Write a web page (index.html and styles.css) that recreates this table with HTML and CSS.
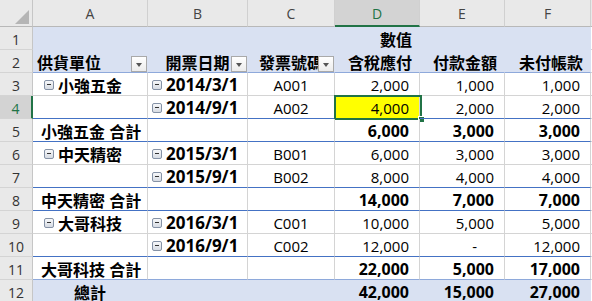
FILE: index.html
```html
<!DOCTYPE html>
<html>
<head>
<meta charset="utf-8">
<link rel="stylesheet" href="styles.css">
</head>
<body>
<div class="sheet">
  <div class="corner"><span class="tri"></span></div>
  <div class="ch">A</div>
  <div class="ch">B</div>
  <div class="ch">C</div>
  <div class="ch sel">D</div>
  <div class="ch">E</div>
  <div class="ch">F</div>
  <div class="ch fill"></div>

  <div class="rh">1</div>
  <div class="c ph"></div>
  <div class="c ph"></div>
  <div class="c ph"></div>
  <div class="c ph hd b">數值</div>
  <div class="c ph"></div>
  <div class="c ph"></div>
  <div class="c fill"></div>

  <div class="rh">2</div>
  <div class="c ph r2 b">供貨單位<span class="flt"></span></div>
  <div class="c ph r2 b ctr">開票日期<span class="flt"></span></div>
  <div class="c ph r2 b ctr clip"><span class="txt">發票號碼</span><span class="flt"></span></div>
  <div class="c ph r2 hd b">含稅應付</div>
  <div class="c ph r2 hd b">付款金額</div>
  <div class="c ph r2 hd b">未付帳款</div>
  <div class="c fill"></div>

  <div class="rh">3</div>
  <div class="c b lv1"><span class="tg"></span>小強五金</div>
  <div class="c b dt lv2"><span class="tg"></span>2014/3/1</div>
  <div class="c ctr">A001</div>
  <div class="c num">2,000</div>
  <div class="c num">1,000</div>
  <div class="c num">1,000</div>
  <div class="c fill"></div>

  <div class="rh rsel">4</div>
  <div class="c bl"></div>
  <div class="c b dt lv2 bl"><span class="tg"></span>2014/9/1</div>
  <div class="c ctr bl">A002</div>
  <div class="c num bl hl">4,000<span class="cur"><span class="handle"></span></span></div>
  <div class="c num bl">2,000</div>
  <div class="c num bl">2,000</div>
  <div class="c fill"></div>

  <div class="rh">5</div>
  <div class="c b st bl">小強五金 合計</div>
  <div class="c bl"></div>
  <div class="c bl"></div>
  <div class="c num b bl">6,000</div>
  <div class="c num b bl">3,000</div>
  <div class="c num b bl">3,000</div>
  <div class="c fill"></div>

  <div class="rh">6</div>
  <div class="c b lv1"><span class="tg"></span>中天精密</div>
  <div class="c b dt lv2"><span class="tg"></span>2015/3/1</div>
  <div class="c ctr">B001</div>
  <div class="c num">6,000</div>
  <div class="c num">3,000</div>
  <div class="c num">3,000</div>
  <div class="c fill"></div>

  <div class="rh">7</div>
  <div class="c bl"></div>
  <div class="c b dt lv2 bl"><span class="tg"></span>2015/9/1</div>
  <div class="c ctr bl">B002</div>
  <div class="c num bl">8,000</div>
  <div class="c num bl">4,000</div>
  <div class="c num bl">4,000</div>
  <div class="c fill"></div>

  <div class="rh">8</div>
  <div class="c b st bl">中天精密 合計</div>
  <div class="c bl"></div>
  <div class="c bl"></div>
  <div class="c num b bl">14,000</div>
  <div class="c num b bl">7,000</div>
  <div class="c num b bl">7,000</div>
  <div class="c fill"></div>

  <div class="rh">9</div>
  <div class="c b lv1"><span class="tg"></span>大哥科技</div>
  <div class="c b dt lv2"><span class="tg"></span>2016/3/1</div>
  <div class="c ctr">C001</div>
  <div class="c num">10,000</div>
  <div class="c num">5,000</div>
  <div class="c num">5,000</div>
  <div class="c fill"></div>

  <div class="rh">10</div>
  <div class="c bl"></div>
  <div class="c b dt lv2 bl"><span class="tg"></span>2016/9/1</div>
  <div class="c ctr bl">C002</div>
  <div class="c num bl">12,000</div>
  <div class="c num dash bl">-</div>
  <div class="c num bl">12,000</div>
  <div class="c fill"></div>

  <div class="rh">11</div>
  <div class="c b st bl2">大哥科技 合計</div>
  <div class="c bl2"></div>
  <div class="c bl2"></div>
  <div class="c num b bl2">22,000</div>
  <div class="c num b bl2">5,000</div>
  <div class="c num b bl2">17,000</div>
  <div class="c fill"></div>

  <div class="rh">12</div>
  <div class="c ph b ctr">總計</div>
  <div class="c ph"></div>
  <div class="c ph"></div>
  <div class="c ph num b">42,000</div>
  <div class="c ph num b">15,000</div>
  <div class="c ph num b">27,000</div>
  <div class="c fill"></div>
</div>
</body>
</html>
```

FILE: styles.css
```css
html, body {
  margin: 0;
  padding: 0;
  background: #ffffff;
}

.sheet {
  display: grid;
  grid-template-columns: 33px 115px 100px 87px 85px 85px 86px 1fr;
  grid-template-rows: 27px repeat(12, 23px);
  font-family: "Open Sans", "Noto Sans CJK TC", sans-serif;
  font-size: 15px;
  color: #000;
  width: 592px;
}

.sheet > div {
  box-sizing: border-box;
}

.corner {
  background: #e9e9e9;
  border-right: 1px solid #c6c6c6;
  border-bottom: 1px solid #b8b8b8;
  display: flex;
  justify-content: flex-end;
  align-items: flex-end;
  padding: 0 3px 2px 0;
}

.tri {
  width: 0;
  height: 0;
  border-left: 14px solid transparent;
  border-bottom: 14px solid #b5b5b5;
}

.ch {
  background: #e9e9e9;
  border-right: 1px solid #d0d0d0;
  border-bottom: 1px solid #b8b8b8;
  display: flex;
  align-items: center;
  justify-content: center;
  font-size: 14px;
  color: #444;
  padding-top: 1px;
}

.ch.sel {
  background: #d3d3d3;
  color: #217346;
  border-bottom: 2px solid #217346;
}

.ch.fill {
  border-right: none;
}

.rh {
  background: #e9e9e9;
  border-right: 1px solid #c6c6c6;
  border-bottom: 1px solid #d4d4d4;
  display: flex;
  align-items: center;
  justify-content: center;
  font-size: 14px;
  color: #333;
  padding-top: 2px;
}

.rh.rsel {
  background: #d3d3d3;
  color: #217346;
  border-right: 2px solid #217346;
}

.c {
  border-right: 1px solid #d4d4d4;
  border-bottom: 1px solid #d4d4d4;
  display: flex;
  align-items: center;
  padding: 1px 4px 0 4px;
  white-space: nowrap;
  position: relative;
}

.c.fill {
  border-right: none;
}

.b {
  font-weight: 700;
  font-size: 16px;
}

.dt {
  font-size: 17px;
}

.ph {
  background: #d9e1f2;
  border-right-color: #d9e1f2;
  border-bottom-color: #d9e1f2;
}

.r2 {
  border-bottom-color: #8ea9db;
}

.hd {
  justify-content: flex-end;
  padding-right: 7px;
}

.ctr {
  justify-content: center;
}

.num {
  justify-content: flex-end;
  padding-right: 10px;
}

.dash {
  padding-right: 27px;
}

.lv1 {
  padding-left: 11px;
}

.lv2 {
  padding-left: 4px;
}

.st {
  padding-left: 8px;
}

.bl {
  border-bottom-color: #4472c4;
}

.bl2 {
  border-bottom-color: #8ea9db;
}

.hl {
  background: #ffff00;
}

.clip {
  overflow: hidden;
}

.tg {
  width: 10px;
  height: 10px;
  box-sizing: border-box;
  border: 1px solid #8592a6;
  border-radius: 2px;
  background: linear-gradient(#f7f8fa, #d6dbe3);
  position: relative;
  margin-right: 4px;
  flex-shrink: 0;
}

.tg::after {
  content: "";
  position: absolute;
  left: 2px;
  right: 2px;
  top: 3px;
  height: 1px;
  background: #333;
}

.flt {
  position: absolute;
  right: 0;
  bottom: 0;
  width: 16px;
  height: 16px;
  box-sizing: border-box;
  border: 1px solid #a9a9a9;
  background: linear-gradient(#ffffff, #ececec);
}

.flt::after {
  content: "";
  position: absolute;
  left: 4px;
  top: 6px;
  width: 0;
  height: 0;
  border-left: 3.5px solid transparent;
  border-right: 3.5px solid transparent;
  border-top: 4px solid #555;
}

.cur {
  position: absolute;
  left: -1px;
  top: -1px;
  width: 88px;
  height: 25px;
  box-sizing: border-box;
  border: 2px solid #217346;
}

.handle {
  position: absolute;
  right: -5px;
  bottom: -5px;
  width: 7px;
  height: 7px;
  box-sizing: border-box;
  background: #217346;
  border: 1px solid #ffffff;
}
```
